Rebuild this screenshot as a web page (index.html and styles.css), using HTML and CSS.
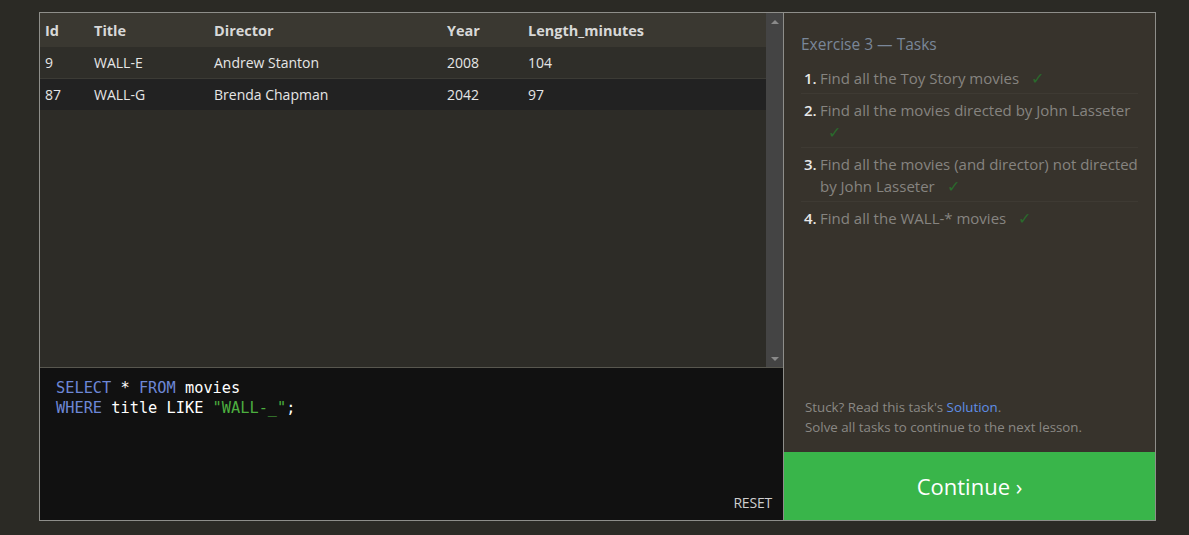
FILE: index.html
```html
<!DOCTYPE html>
<html>
<head>
<meta charset="utf-8">
<link rel="stylesheet" href="styles.css">
</head>
<body>
<div class="app">
  <div class="left">
    <div class="results">
      <div class="table-wrap">
        <table class="grid">
          <colgroup>
            <col class="c-id"><col class="c-title"><col class="c-dir"><col class="c-year"><col>
          </colgroup>
          <thead>
            <tr><th>Id</th><th>Title</th><th>Director</th><th>Year</th><th>Length_minutes</th></tr>
          </thead>
          <tbody>
            <tr class="odd"><td>9</td><td>WALL-E</td><td>Andrew Stanton</td><td>2008</td><td>104</td></tr>
            <tr class="even"><td>87</td><td>WALL-G</td><td>Brenda Chapman</td><td>2042</td><td>97</td></tr>
          </tbody>
        </table>
      </div>
      <div class="scrollbar">
        <span class="arrow up"></span>
        <span class="arrow down"></span>
      </div>
    </div>
    <div class="editor">
      <pre class="code"><span class="kw">SELECT</span> * <span class="kw">FROM</span> movies
<span class="kw">WHERE</span> title LIKE <span class="str">"WALL-_"</span>;</pre>
      <div class="reset">RESET</div>
    </div>
  </div>
  <div class="right">
    <div class="tasks">
      <h2 class="tasks-title">Exercise 3 — Tasks</h2>
      <ol class="task-list">
        <li><span class="num">1.</span><span class="txt">Find all the Toy Story movies <span class="check">✓</span></span></li>
        <li><span class="num">2.</span><span class="txt">Find all the movies directed by John Lasseter <span class="check">✓</span></span></li>
        <li><span class="num">3.</span><span class="txt">Find all the movies (and director) not directed by John Lasseter <span class="check">✓</span></span></li>
        <li class="last"><span class="num">4.</span><span class="txt">Find all the WALL-* movies <span class="check">✓</span></span></li>
      </ol>
    </div>
    <div class="hint">
      <p>Stuck? Read this task's <a class="link">Solution</a>.</p>
      <p>Solve all tasks to continue to the next lesson.</p>
    </div>
    <div class="continue">Continue ›</div>
  </div>
</div>
</body>
</html>
```

FILE: styles.css
```css
html, body {
  margin: 0;
  padding: 0;
  background: #2b2a25;
  font-family: "Open Sans", "Noto Sans", sans-serif;
}
.app {
  margin: 12px 0 0 39px;
  width: 1115px;
  height: 507px;
  border: 1px solid #8e8e8a;
  display: flex;
}
.left {
  width: 743px;
  border-right: 1px solid #8e8e8a;
  display: flex;
  flex-direction: column;
}
.results {
  height: 354px;
  border-bottom: 1px solid #58574f;
  display: flex;
  background: #2d2c27;
}
.table-wrap {
  flex: 1;
}
.grid {
  width: 100%;
  border-collapse: collapse;
  font-size: 14px;
  color: #e6e6e6;
}
.c-id { width: 49px; }
.c-title { width: 120px; }
.c-dir { width: 233px; }
.c-year { width: 81px; }
.grid th {
  text-align: left;
  font-weight: 700;
  font-size: 14.5px;
  color: #d8d8d8;
  background: #3a3831;
  height: 34px;
  padding: 0 5px;
}
.grid td {
  height: 31px;
  padding: 0 5px;
}
.grid tr.odd td {
  background: #2f2e29;
  border-bottom: 1px solid #3c3b35;
}
.grid tr.even td {
  background: #222222;
}
.scrollbar {
  width: 17px;
  background: #444444;
  display: flex;
  flex-direction: column;
  justify-content: space-between;
  align-items: center;
  padding: 7px 0 6px;
  box-sizing: border-box;
}
.arrow {
  width: 0;
  height: 0;
  border-left: 4px solid transparent;
  border-right: 4px solid transparent;
}
.arrow.up { border-bottom: 4px solid #8a8a8a; }
.arrow.down { border-top: 4px solid #8a8a8a; }
.editor {
  flex: 1;
  background: #111111;
  position: relative;
}
.code {
  margin: 0;
  padding: 10px 0 0 16px;
  font-family: "DejaVu Sans Mono", monospace;
  font-size: 15.3px;
  line-height: 20px;
  color: #ffffff;
}
.kw { color: #6d87d6; }
.str { color: #4caf3f; }
.reset {
  position: absolute;
  right: 11px;
  bottom: 8px;
  font-size: 14px;
  color: #cfcfcf;
  letter-spacing: -0.2px;
}
.right {
  flex: 1;
  background: #37332c;
  display: flex;
  flex-direction: column;
}
.tasks {
  flex: 1;
  padding: 20px 17px 0 17px;
}
.tasks-title {
  margin: 0 0 7px 0;
  font-size: 15.5px;
  font-weight: 400;
  color: #7a8799;
}
.task-list {
  list-style: none;
  margin: 0;
  padding: 0;
}
.task-list li {
  display: flex;
  font-size: 15px;
  line-height: 22px;
  color: #868480;
  padding: 5px 0 4px 3px;
  border-bottom: 1px solid #3e3a33;
}
.task-list li.last { border-bottom: none; }
.num {
  width: 16px;
  flex: none;
  color: #e8e8e8;
  font-weight: 600;
}
.check {
  color: #2a6a2c;
  margin-left: 8px;
  font-size: 16px;
}
.hint {
  padding: 0 20px 15px 21px;
  font-size: 13.3px;
  color: #8a8884;
}
.hint p {
  margin: 0;
  line-height: 20px;
}
.link { color: #5f8fe8; }
.continue {
  height: 68px;
  background: #39b54a;
  color: #ffffff;
  font-size: 22px;
  display: flex;
  align-items: center;
  justify-content: center;
}
```
